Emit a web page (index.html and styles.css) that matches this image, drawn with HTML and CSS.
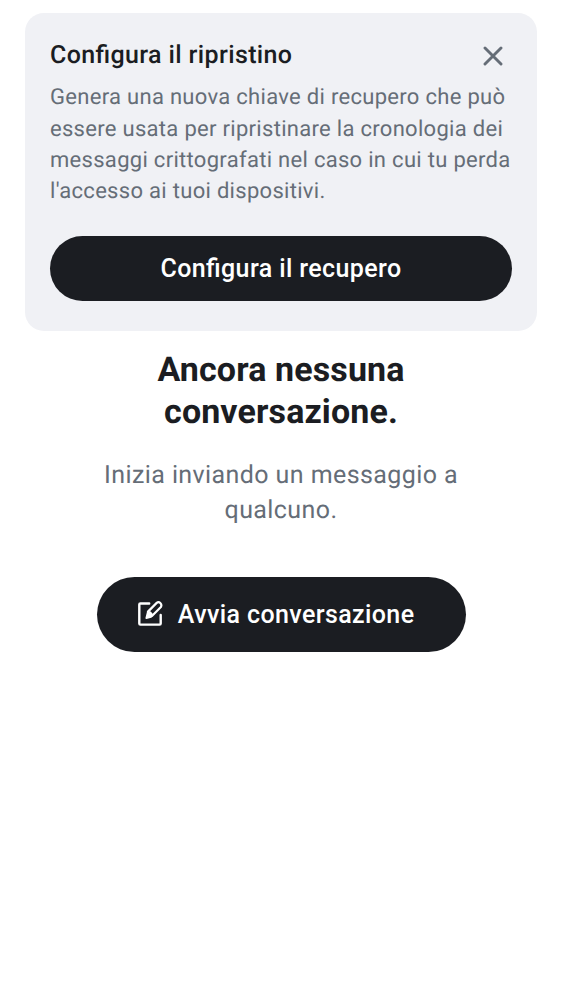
FILE: index.html
```html
<!DOCTYPE html>
<html lang="it">
<head>
<meta charset="utf-8">
<title>Conversazioni</title>
<link rel="stylesheet" href="styles.css">
</head>
<body>
<section class="card">
  <header class="card-head">
    <h2 class="card-title">Configura il ripristino</h2>
    <button class="close" aria-label="Chiudi"><svg width="20" height="20" viewBox="0 0 20 20"><path d="M2 2 18 18M18 2 2 18" fill="none" stroke="#656d77" stroke-width="2.9" stroke-linecap="round"/></svg></button>
  </header>
  <p class="card-text">Genera una nuova chiave di recupero che può<br>essere usata per ripristinare la cronologia dei<br>messaggi crittografati nel caso in cui tu perda<br>l'accesso ai tuoi dispositivi.</p>
  <button class="pill recover">Configura il recupero</button>
</section>
<main class="empty">
  <h1 class="empty-title">Ancora nessuna<br>conversazione.</h1>
  <p class="empty-text">Inizia inviando un messaggio a<br>qualcuno.</p>
  <button class="pill start">
    <svg class="compose" width="28" height="28" viewBox="0 0 28 28" fill="none" stroke="#fff" stroke-width="2.4" stroke-linejoin="round" stroke-linecap="round"><path d="M13.200 3.500H4.400Q3.300 3.500 3.300 4.600V23.500Q3.300 24.600 4.400 24.600H23.600Q24.700 24.600 24.700 23.500V15"/><path stroke-width="2.200" d="M12 11.600 20.700 2.900Q22.500 1.300 24.300 3T24.900 6.900L16.200 15.700"/><path fill="#fff" stroke-width="1.800" d="M10.300 18.100 11.900 11.800 14 12.200 15.700 13.900 16 15.800 15 16.800Z"/></svg>
    <span>Avvia conversazione</span>
  </button>
</main>
</body>
</html>
```
FILE: styles.css
```css
* { box-sizing: border-box; }
body {
  margin: 0;
  padding: 12.5px 25px;
  background: #fff;
  font-family: Roboto, sans-serif;
  color: #1b1d22;
  text-rendering: geometricPrecision;
  font-feature-settings: "liga" 1;
}
h1, h2, p { margin: 0; font-weight: 400; white-space: nowrap; }
button { border: 0; padding: 0; font: inherit; }
.card {
  height: 318.5px;
  padding: 25.5px 25px 0;
  border-radius: 19px;
  background: #f0f1f5;
}
.card-head { display: flex; justify-content: space-between; height: 44.4px; }
.card-title { font-size: 25px; line-height: 36px; font-weight: 500; letter-spacing: 0.37px; }
.close { display: flex; width: 20px; height: 20px; margin: 8.3px 8.7px 0 0; background: none; }
.card-text { color: #656d77; font-size: 22px; line-height: 31.2px; letter-spacing: 0.3px; }
.pill {
  display: flex;
  align-items: center;
  justify-content: center;
  border-radius: 40px;
  background: #1b1d22;
  color: #fff;
  font-size: 25px;
  font-weight: 500;
  letter-spacing: 0.39px;
  font-feature-settings: "liga" 1;
  white-space: nowrap;
}
.recover { width: 462px; height: 65.5px; margin-top: 28.6px; }
.empty { display: flex; flex-direction: column; align-items: center; padding-top: 18px; text-align: center; }
.empty-title { font-size: 34px; line-height: 42px; font-weight: 700; letter-spacing: 0.12px; }
.empty-text { margin-top: 25px; color: #656d77; font-size: 25px; line-height: 35px; letter-spacing: 0.41px; }
.start { justify-content: flex-start; width: 369px; height: 75px; margin-top: 48.6px; padding-left: 39px; gap: 14.3px; }
```
